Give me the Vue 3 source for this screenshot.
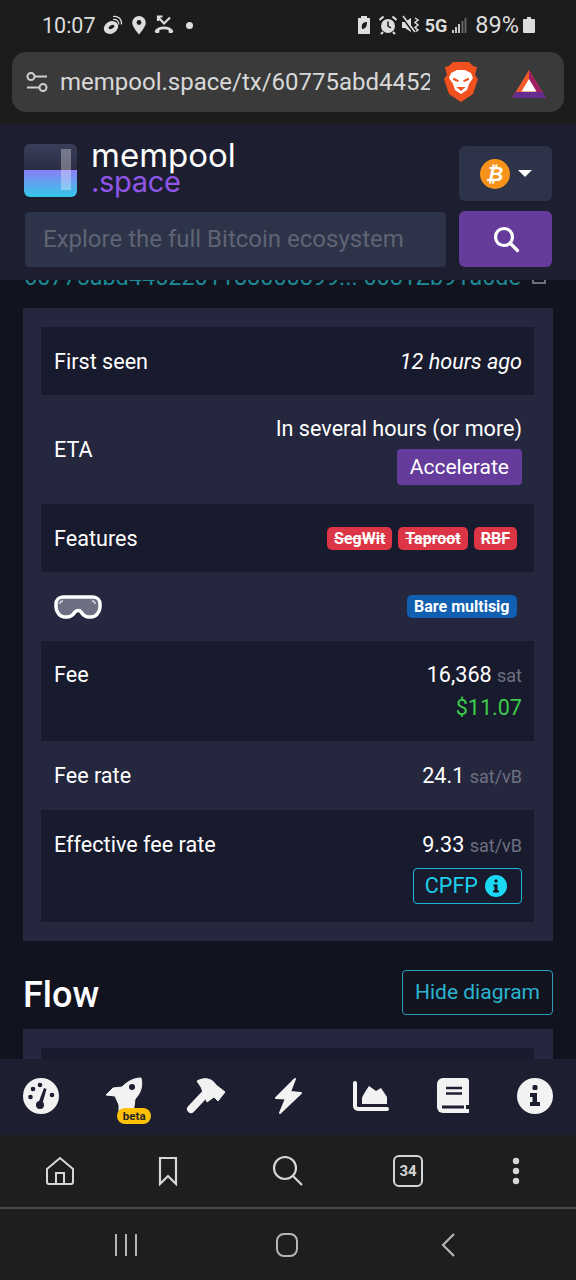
<template>
  <div class="phone">
    <!-- android status bar -->
    <div class="status-bar">
      <span class="time">10:07</span>
      <svg class="st-swirl" width="20" height="20" viewBox="0 0 20 20"><ellipse cx="8" cy="12.500" rx="7.500" ry="6" fill="#ddd" transform="rotate(-30 8 12.500)"/><ellipse cx="8.500" cy="12" rx="3.200" ry="1.800" fill="#1c1c1c" transform="rotate(-30 8.500 12)"/><path d="M10 1.500c5-1 9 2.500 8.500 8M10 4.500c3.500-.5 6 1.500 5.800 5" fill="none" stroke="#ddd" stroke-width="1.200"/></svg>
      <svg class="st-pin" width="16" height="20" viewBox="0 0 16 20"><path d="M8 1a6.800 6.800 0 0 0-6.800 6.800C1.200 12 8 19.500 8 19.500s6.800-7.500 6.800-11.700A6.800 6.800 0 0 0 8 1z" fill="#ddd"/><circle cx="8" cy="7.500" r="2.400" fill="#1c1c1c"/></svg>
      <svg class="st-call" width="20" height="20" viewBox="0 0 20 20"><path d="M4 6V1.500h4.500M4 2l6 6.500 6-6" fill="none" stroke="#ddd" stroke-width="2.200"/><path d="M1 15.500C4 10 16 10 19 15.500c.5 1 0 2-1 2.500h-3c-.5-1-.5-2-.5-3-2.500-1-6.500-1-9 0 0 1 0 2-.5 3H2c-1-.5-1.500-1.500-1-2.500z" fill="#ddd"/></svg>
      <span class="st-dot"></span>
      <span class="st-spacer"></span>
      <svg width="14" height="20" viewBox="0 0 14 20"><path d="M4 1h6v2h3v16H1V3h3z" fill="#ddd"/><path d="M10 7c-4 0-6 2-5 7 3 0 5-2 5-7z" fill="#1c1c1c"/></svg>
      <svg class="st-alarm" width="20" height="20" viewBox="0 0 20 20"><circle cx="10" cy="11" r="7" fill="#ddd"/><path d="M10 6.500V11l3 2" fill="none" stroke="#1c1c1c" stroke-width="1.500"/><path d="M1.500 5l4-3.500M18.500 5l-4-3.500M5 17l-2 2M15 17l2 2" stroke="#ddd" stroke-width="2.200"/></svg>
      <svg class="st-mute" width="20" height="20" viewBox="0 0 20 20"><path d="M1 7h3l6-4v14l-6-4H1z" fill="#ddd"/><path d="M1 2l11 15" stroke="#1c1c1c" stroke-width="1.800"/><path d="M2 1l12 16" stroke="#ddd" stroke-width="1.500"/><path d="M14 3l3 2-3 2.500 3 2.500-3 2.500 3 2.500-2 1.500" stroke="#ddd" stroke-width="1.500" fill="none"/></svg>
      <span class="five-g">5G</span>
      <svg class="st-signal" width="15" height="18" viewBox="0 0 15 18"><path d="M1 17v-3M4 17v-6M7 17V8" stroke="#ddd" stroke-width="1.800"/><path d="M10.500 17V5M13.500 17V2" stroke="#6a6a6a" stroke-width="1.800"/></svg>
      <span class="battery-text">89%</span>
      <svg class="st-batt" width="12" height="18" viewBox="0 0 12 18"><path d="M4 1h4v2h3a1 1 0 0 1 1 1v12a1 1 0 0 1-1 1H1a1 1 0 0 1-1-1V4a1 1 0 0 1 1-1h3z" fill="#ddd"/></svg>
    </div>

    <!-- browser url bar -->
    <div class="url-wrap">
      <div class="url-bar">
        <svg width="24" height="24" viewBox="0 0 24 24" fill="none" stroke="#cfcfcf" stroke-width="2"><circle cx="6" cy="6.500" r="3.500"/><path d="M10 6.500h12M2 17.500h12"/><circle cx="18" cy="17.500" r="3.500"/></svg>
        <div class="url-text">mempool.space/tx/60775abd44522011880008899</div>
        <svg class="lion" width="34" height="42" viewBox="0 0 34 42"><path d="M9 1h16l4 4 4 1-2 8 3 4-5 15-12 8-12-8L0 18l3-4-2-8 4-1z" fill="#f1501f"/><path d="M7 12l6-3h8l6 3 2 5-4 6-2 6-6 4-6-4-2-6-4-6z" fill="#fff"/><path d="M9.500 16.500l5.500 3-1 1.500-5-2zM24.500 16.500l-5.500 3 1 1.500 5-2zM12.500 26h9L17 30z" fill="#f1501f"/></svg>
        <svg class="bat" width="34" height="30" viewBox="0 0 34 30"><path d="M17 1L0 29h34z" fill="#f15a2b"/><path d="M17 1l17 28h-7L17 12z" fill="#9e1f63"/><path d="M3.600 23h26.800l3.600 6H0z" fill="#662d91"/><path d="M17 10l-7.500 12.500h15z" fill="#fff"/></svg>
      </div>
    </div>

    <!-- mempool header -->
    <header class="site-header">
      <div class="header-top">
        <div class="brand">
          <div class="logo"><span class="logo-bar"></span></div>
          <div class="brand-text">
            <div class="brand-main">mempool</div>
            <div class="brand-sub">.space</div>
          </div>
        </div>
        <div class="currency">
          <span class="btc">₿</span>
          <span class="caret"></span>
        </div>
      </div>
      <div class="search-row">
        <div class="search-input">Explore the full Bitcoin ecosystem</div>
        <div class="search-btn">
          <svg width="28" height="28" viewBox="0 0 28 28" fill="none" stroke="#fff" stroke-width="3.200"><circle cx="12" cy="12" r="8.500"/><path d="M18.500 18.500l7 7" stroke-linecap="round"/></svg>
        </div>
      </div>
    </header>

    <main class="content">
      <div class="tx-hash">
        <span>60775abd4452201188000899... 0081Zb91a0de</span>
        <svg width="14" height="14" viewBox="0 0 14 14" fill="none" stroke="#8a8d99" stroke-width="1.500"><rect x="1" y="1" width="12" height="12"/></svg>
      </div>

      <section class="box">
        <div class="row dark center">
          <span>First seen</span>
          <i>12 hours ago</i>
        </div>
        <div class="row eta center">
          <span>ETA</span>
          <div class="right">
            <div>In several hours (or more)</div>
            <span class="accel">Accelerate</span>
          </div>
        </div>
        <div class="row dark center">
          <span>Features</span>
          <div class="badges">
            <span class="badge red">SegWit</span>
            <span class="badge red">Taproot</span>
            <span class="badge red">RBF</span>
          </div>
        </div>
        <div class="row tall center">
          <svg class="goggles" width="48" height="24" viewBox="0 0 48 24"><path d="M9 2h30c4 0 7 3 7 7v3c0 5-4 10-9 10h-2c-4 0-6-2-8-5-1-2-4-2-6 0-2 3-4 5-8 5h-2c-5 0-9-5-9-10V9c0-4 3-7 7-7z" fill="#6f6f83" stroke="#fff" stroke-width="3.500"/><path d="M6 9c0-2 1-3 3-3M38 6c2 0 3 1 3 3" fill="none" stroke="#d8d8e0" stroke-width="1.500"/></svg>
          <div class="badges">
            <span class="badge blue">Bare multisig</span>
          </div>
        </div>
        <div class="row dark fee">
          <span>Fee</span>
          <div class="right">
            <div>16,368 <span class="unit">sat</span></div>
            <div class="usd">$11.07</div>
          </div>
        </div>
        <div class="row tall center">
          <span>Fee rate</span>
          <div>24.1 <span class="unit">sat/vB</span></div>
        </div>
        <div class="row dark fee eff">
          <span>Effective fee rate</span>
          <div class="right">
            <div>9.33 <span class="unit">sat/vB</span></div>
            <span class="cpfp">CPFP
              <svg width="22" height="22" viewBox="0 0 22 22"><circle cx="11" cy="11" r="11" fill="#1bd8f4"/><rect x="9.500" y="4.500" width="3" height="3" rx="1" fill="#11131f"/><path d="M8.500 9.500h4v6h1.500v2H8v-2h1.500v-4h-1z" fill="#11131f"/></svg>
            </span>
          </div>
        </div>
      </section>

      <div class="flow-head">
        <h2>Flow</h2>
        <span class="hide-btn">Hide diagram</span>
      </div>
      <section class="box next"><div class="next-inner"></div></section>
    </main>

    <!-- mempool bottom nav -->
    <nav class="site-nav">
      <span class="nav-item">
        <svg width="36" height="36" viewBox="0 0 36 36"><circle cx="18" cy="18" r="18" fill="#f2f2f2"/><g fill="#1d1f31"><circle cx="7.500" cy="19" r="2.300"/><circle cx="10" cy="11" r="2.300"/><circle cx="17" cy="7" r="2.300"/><circle cx="29" cy="17" r="2.300"/><circle cx="17" cy="27" r="4"/><path d="M15 26l6-16 2.500 1-4.500 16z"/></g></svg>
      </span>
      <span class="nav-item rocket">
        <svg width="38" height="38" viewBox="0 0 38 38"><path d="M36 1C28 1 22 5 17 10L8 11 1 18l9 1 4 9v9h14l2-15c6-6 8-14 6-21z" fill="#f2f2f2" stroke="#f2f2f2" stroke-linejoin="round"/><circle cx="27" cy="10" r="3" fill="#1d1f31"/></svg>
        <span class="beta">beta</span>
      </span>
      <span class="nav-item">
        <svg width="40" height="38" viewBox="0 0 40 38"><path d="M5 32l16-17" stroke="#f2f2f2" stroke-width="8" stroke-linecap="round"/><path d="M11 4c7-4 15-3 19 4l9 7-7 9-4-4-7 5-6-15z" fill="#f2f2f2" stroke="#f2f2f2" stroke-linejoin="round"/></svg>
      </span>
      <span class="nav-item">
        <svg width="30" height="38" viewBox="0 0 30 38"><path d="M22 2L3 21l10 .5L7 36l21-20-11-1z" fill="#f2f2f2" stroke="#f2f2f2" stroke-width="2" stroke-linejoin="round"/></svg>
      </span>
      <span class="nav-item">
        <svg width="37" height="32" viewBox="0 0 37 32"><path d="M3 3v23a3 3 0 0 0 3 3h29" fill="none" stroke="#f2f2f2" stroke-width="4" stroke-linecap="round"/><path d="M10 24v-6c0-1 6-11 7-12l7 5 5-3 6 9v7z" fill="#f2f2f2"/></svg>
      </span>
      <span class="nav-item">
        <svg width="32" height="36" viewBox="0 0 32 36"><path d="M6 0h23a3 3 0 0 1 3 3v32H6a6 6 0 0 1-6-6V6a6 6 0 0 1 6-6z" fill="#f2f2f2"/><path d="M9 10h16M9 15.500h16" stroke="#1d1f31" stroke-width="2.600"/><path d="M5 29h22" stroke="#1d1f31" stroke-width="3"/><path d="M29 27h3v4h-3z" fill="#1d1f31"/></svg>
      </span>
      <span class="nav-item">
        <svg width="36" height="36" viewBox="0 0 36 36"><circle cx="18" cy="18" r="18" fill="#f2f2f2"/><rect x="15.500" y="7" width="5" height="5" rx="1.500" fill="#1d1f31"/><path d="M13 15h7v9h3v4H13v-4h2.500v-5H13z" fill="#1d1f31"/></svg>
      </span>
    </nav>

    <!-- browser toolbar -->
    <div class="browser-bar">
      <svg width="30" height="30" viewBox="0 0 30 30" fill="none" stroke="#d6d6d6" stroke-width="2"><path d="M2 13L15 2l13 11v13a2 2 0 0 1-2 2H4a2 2 0 0 1-2-2z"/><path d="M11 28V17h8v11"/></svg>
      <svg width="20" height="30" viewBox="0 0 20 30" fill="none" stroke="#d6d6d6" stroke-width="2.200"><path d="M2 2h16v26l-8-8-8 8z"/></svg>
      <svg width="32" height="32" viewBox="0 0 32 32" fill="none" stroke="#d6d6d6" stroke-width="2.200"><circle cx="13" cy="13" r="11"/><path d="M21 21l9 9"/></svg>
      <span class="tabs">34</span>
      <svg width="10" height="28" viewBox="0 0 10 28" fill="#d6d6d6"><circle cx="5" cy="4" r="3.200"/><circle cx="5" cy="14" r="3.200"/><circle cx="5" cy="24" r="3.200"/></svg>
    </div>

    <!-- android nav -->
    <div class="sys-nav">
      <svg width="24" height="24" viewBox="0 0 24 24" stroke="#b5b5b5" stroke-width="2"><path d="M2 1v22M12 1v22M22 1v22"/></svg>
      <svg width="24" height="26" viewBox="0 0 24 26" fill="none" stroke="#b5b5b5" stroke-width="2"><rect x="2" y="2" width="20" height="22" rx="7"/></svg>
      <svg width="16" height="26" viewBox="0 0 16 26" fill="none" stroke="#b5b5b5" stroke-width="2.200"><path d="M14 2L3 13l11 11"/></svg>
    </div>
  </div>
</template>

<script setup>
</script>

<style>
html, body {
  margin: 0;
  background: #1c1c1c;
}
</style>

<style scoped>
.phone {
  width: 576px;
  height: 1280px;
  display: flex;
  flex-direction: column;
  overflow: hidden;
  background: #1c1c1c;
  color: #fff;
  font-family: Roboto, "Liberation Sans", sans-serif;
  font-size: 21.6px;
}

.status-bar {
  height: 52px;
  flex: none;
  display: flex;
  align-items: center;
  padding: 0 41px 2px 42px;
  box-sizing: border-box;
  color: #dcdcdc;
}
.time { font-size: 21.5px; }
.st-swirl { margin-left: 7px; }
.st-pin { margin-left: 8px; }
.st-call { margin-left: 7px; }
.st-dot { width: 7px; height: 7px; border-radius: 50%; background: #ddd; margin-left: 12px; }
.st-spacer { flex: 1; }
.st-alarm { margin-left: 7px; }
.st-mute { margin-left: 3px; }
.five-g { font-size: 18px; font-weight: 700; margin-left: 4px; }
.st-signal { margin-left: 5px; }
.battery-text { font-size: 23.5px; margin-left: 8px; }
.st-batt { margin-left: 4px; }

.url-wrap { height: 72px; flex: none; }
.url-bar {
  margin: 0 12px;
  height: 60px;
  background: #3a3a3a;
  border-radius: 14px;
  display: flex;
  align-items: center;
  padding: 0 13px;
}
.url-text {
  width: 370px;
  margin-left: 11px;
  font-size: 24px;
  color: #d8d8d8;
  white-space: nowrap;
  overflow: hidden;
}
.lion { margin-left: 14px; }
.bat { margin-left: 34px; margin-top: 4px; }

.site-header {
  height: 156px;
  flex: none;
  box-sizing: border-box;
  background: #1d1f31;
  padding: 20px 24px 0 25px;
  position: relative;
  z-index: 1;
}
.header-top {
  display: flex;
  justify-content: space-between;
  align-items: flex-start;
}
.brand { display: flex; gap: 14px; margin-left: -1px; }
.logo {
  width: 53px;
  height: 53px;
  border-radius: 6px;
  background: linear-gradient(#3a3e5a 0, #2a2d44 49%, #8a7ff5 49%, #34c8ea 100%);
  position: relative;
  overflow: hidden;
}
.logo-bar {
  position: absolute;
  left: 37px;
  top: 5px;
  width: 10px;
  height: 41px;
  background: rgba(255, 255, 255, 0.32);
}
.brand-text { font-family: Inter, "Open Sans", sans-serif; margin-top: -5px; }
.brand-main { font-size: 33px; line-height: 32px; color: #fff; }
.brand-sub { font-size: 29px; line-height: 22px; letter-spacing: -0.3px; color: #9056e8; }
.currency {
  width: 93px;
  height: 55px;
  margin-top: 2px;
  background: #2d3348;
  border-radius: 6px;
  display: flex;
  align-items: center;
  justify-content: center;
  gap: 8px;
}
.btc {
  width: 30px;
  height: 30px;
  border-radius: 50%;
  background: #f7931a;
  color: #fff;
  font-size: 20px;
  font-weight: 700;
  text-align: center;
  line-height: 30px;
  font-style: italic;
}
.caret {
  border-left: 7px solid transparent;
  border-right: 7px solid transparent;
  border-top: 7px solid #fff;
}
.search-row {
  display: flex;
  justify-content: space-between;
  align-items: center;
  margin-top: 10px;
}
.search-input {
  width: 421px;
  height: 55px;
  box-sizing: border-box;
  background: #2d3348;
  border-radius: 4px;
  padding-left: 18px;
  line-height: 55px;
  font-size: 24px;
  color: #5f6475;
}
.search-btn {
  width: 93px;
  height: 56px;
  background: #653b9c;
  border-radius: 6px;
  display: flex;
  align-items: center;
  justify-content: center;
}

.content {
  flex: 1;
  min-height: 0;
  overflow: hidden;
  background: #11131f;
  padding: 0 23px;
}
.tx-hash {
  height: 28px;
  margin-top: -17px;
  display: flex;
  align-items: center;
  justify-content: space-between;
  padding: 0 7px 0 1px;
  font-size: 23.4px;
  color: #1d8a96;
  white-space: nowrap;
  margin-bottom: 17px;
}
.box {
  background: #24273e;
  padding: 19px 19px 19px 18px;
}
.row {
  display: flex;
  justify-content: space-between;
  padding: 0 12px 0 13px;
  min-height: 68px;
  box-sizing: border-box;
  color: #fff;
}
.tall { min-height: 69px; }
.center { align-items: center; }
.dark { background: #181b2d; }
.eta { min-height: 109px; }
.eta .right { margin-top: 2px; }
.right { text-align: right; }
.accel {
  display: inline-block;
  margin-top: 8px;
  background: #653b9c;
  border-radius: 4px;
  padding: 0 13px;
  line-height: 36px;
  font-size: 21px;
}
.badges { display: flex; gap: 6px; margin-right: 5px; }
.badge {
  font-size: 16px;
  font-weight: 700;
  line-height: 23px;
  padding: 0 7px;
  border-radius: 5px;
}
.red { background: #dc3545; text-decoration: line-through; }
.blue { background: #105fb0; padding: 0 7.5px; }
.goggles { display: block; }
.fee { padding-top: 21px; min-height: 100px; line-height: 26px; }
.usd { color: #3bcc49; margin-top: 6px; }
.unit { color: #6d7080; font-size: 18px; }
.eff { min-height: 112px; padding-top: 22px; }
.cpfp {
  display: inline-flex;
  align-items: center;
  gap: 7px;
  margin-top: 9px;
  box-sizing: border-box;
  height: 36px;
  padding: 0 14px 0 11px;
  border: 1.500px solid #1bb8d6;
  border-radius: 4px;
  color: #1bd0ec;
}

.flow-head {
  display: flex;
  justify-content: space-between;
  align-items: flex-start;
  height: 45px;
  margin-top: 29px;
  margin-bottom: 14px;
}
.flow-head h2 {
  margin: 0;
  font-size: 36px;
  font-weight: 500;
  line-height: 50px;
  height: 45px;
}
.hide-btn {
  box-sizing: border-box;
  width: 151px;
  height: 45px;
  border: 1.500px solid #2a9db8;
  border-radius: 4px;
  text-align: center;
  line-height: 42px;
  font-size: 21px;
  color: #2ab4d0;
}
.box.next { height: 60px; box-sizing: border-box; }
.next-inner { height: 60px; background: #181b2d; }

.site-nav {
  height: 76px;
  flex: none;
  background: #1d1f31;
  display: flex;
  align-items: center;
  justify-content: space-between;
  padding: 0 21px 2px;
  box-sizing: border-box;
}
.nav-item {
  width: 40px;
  display: flex;
  justify-content: center;
  position: relative;
}
.rocket svg { margin-left: 2px; }
.beta {
  position: absolute;
  left: 14px;
  bottom: -9px;
  background: #ffc107;
  color: #212529;
  font-size: 11.500px;
  font-weight: 700;
  line-height: 16px;
  padding: 0 5.500px;
  border-radius: 8px;
}

.browser-bar {
  height: 74px;
  flex: none;
  box-sizing: border-box;
  border-bottom: 2px solid #4a4a4a;
  background: #1e1e1e;
  display: grid;
  grid-template-columns: 108px 108px 132px 108px 108px;
  justify-items: center;
  align-items: center;
  padding-left: 6px;
}
.tabs {
  box-sizing: border-box;
  width: 30px;
  height: 32px;
  border: 2px solid #d6d6d6;
  border-radius: 6px;
  color: #d6d6d6;
  font-size: 15px;
  font-weight: 700;
  text-align: center;
  line-height: 28px;
}
.sys-nav {
  flex: none;
  height: 71px;
  background: #1e1e1e;
  display: grid;
  grid-template-columns: 161px 161px 161px;
  justify-items: center;
  align-items: center;
  padding-left: 45.500px;
}
</style>
